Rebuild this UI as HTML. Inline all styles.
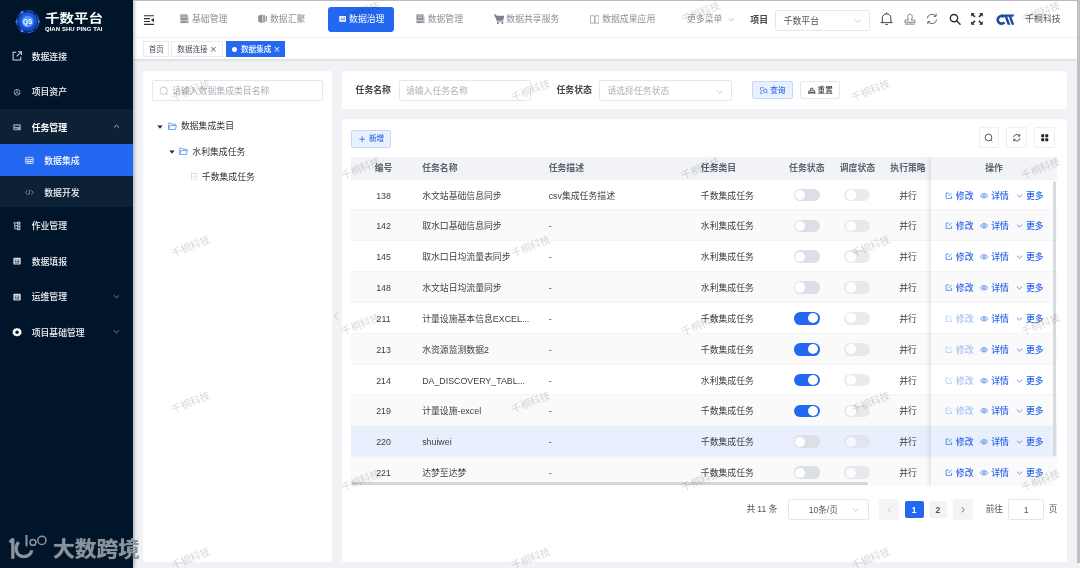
<!DOCTYPE html>
<html lang="zh-CN">
<head>
<meta charset="utf-8">
<title>千数平台 - 数据集成</title>
<style>
*{box-sizing:border-box;margin:0;padding:0}
html,body{width:1080px;height:568px;overflow:hidden;background:#f0f2f5}
body{font-family:"Liberation Sans","Noto Sans CJK SC",sans-serif;font-size:14px;color:#333;position:relative}
#app{position:absolute;left:0;top:0;width:1707px;height:898px;zoom:0.6327;overflow:hidden;background:#f0f2f5;will-change:transform}
svg{display:block}
/* ---------- sidebar ---------- */
.side{position:absolute;left:0;top:0;width:210px;height:898px;background:#001529;z-index:30;box-shadow:2px 0 6px rgba(0,21,41,.35)}
.logo{position:absolute;left:0;top:0;width:210px;height:60px}
.logo .ball{position:absolute;left:24px;top:15px;width:40px;height:40px}
.logo .t1{position:absolute;left:70.5px;top:17.5px;font-size:19px;line-height:26px;font-weight:700;color:#fff;letter-spacing:0;white-space:nowrap;transform:scaleX(1.21);transform-origin:0 0}
.logo .t2{position:absolute;left:71px;top:41.5px;font-size:9.5px;line-height:10px;font-weight:700;color:#fff;white-space:nowrap;letter-spacing:.1px}
.menu{position:absolute;left:0;top:60px;width:210px}
.mi{position:relative;height:56px;line-height:60.5px;color:#f0f2f5;font-size:14px;padding-left:50px;white-space:nowrap;font-weight:500}
.mi .ic{position:absolute;left:19px;top:21px;width:16px;height:16px}
.mi .ar{position:absolute;left:178px;top:23px;width:11px;height:11px}
.sub{background:#0c2135}
.sub .mi.top{height:56px;font-weight:700;color:#fff}
.smi{position:relative;height:50px;line-height:54.5px;color:#f0f2f5;font-size:14px;padding-left:70px;white-space:nowrap;font-weight:500}
.smi .ic{position:absolute;left:40px;top:19px;width:14px;height:14px}
.smi.on{background:#2468f2;color:#fff}
/* ---------- header ---------- */
.head{position:absolute;left:210px;top:0;width:1492px;height:60px;background:#fff;border-bottom:1px solid #f0f1f4;z-index:10}
.nav{position:absolute;top:11px;height:40px;line-height:40px;font-size:14px;color:#8b8f97;white-space:nowrap}
.nav svg{position:absolute;top:13px}
.nav.on{background:#2468f2;color:#fff;border-radius:5px}
.hic{position:absolute;top:19px;width:22px;height:22px;margin-left:-1px}
/* ---------- tabs ---------- */
.tabs{position:absolute;left:210px;top:60px;width:1492px;height:34px;background:#fff;box-shadow:0 1px 4px rgba(0,21,41,.13);z-index:9}
.tag{position:absolute;top:5px;height:25px;line-height:25.5px;border:1px solid #e8eaee;background:#fff;font-size:12px;color:#495060;padding:0 8px;white-space:nowrap}
.tag.on{background:#2468f2;border-color:#2468f2;color:#fff;font-weight:500}
.tag .x{display:inline-block;margin-left:4px;font-size:17px;font-weight:400;line-height:20px;vertical-align:top;position:relative;top:2px;opacity:.85}
.tag .dot{display:inline-block;width:8px;height:8px;border-radius:50%;background:#fff;margin-right:6px;position:relative;top:0}

/* ---------- main ---------- */
.card{position:absolute;background:#fff;border-radius:3px}
.inp{position:absolute;height:32px;line-height:32px;border:1px solid #e5e7ec;border-radius:3px;font-size:14px;color:#adb1b8;white-space:nowrap;background:#fff}
.tn{position:absolute;left:0;width:299px;height:40px}
.tn span{position:absolute;top:0;line-height:44px;font-size:14px;color:#333;white-space:nowrap}
.tn .car{position:absolute;top:16.5px;width:9.5px;height:9.5px;margin-left:-1px}
.tn .fd{position:absolute;top:14px;width:14px;height:14px;margin-left:-.5px}
.lab{position:absolute;top:15px;line-height:34px;font-size:14px;font-weight:700;color:#43464c;white-space:nowrap}
.btn{position:absolute;height:28px;line-height:27px;border:1px solid #e6e8ec;border-radius:3px;font-size:12px;white-space:nowrap;background:#fff;color:#333;font-weight:500}
.btn.pl{background:#e9f0fe;border-color:#c8d8fb;color:#2c69ea}
.tb{position:absolute;top:13.2px;width:32px;height:32px;border:1px solid #eeeff3;border-radius:2px;background:#fff}
.tb svg{position:absolute;left:7px;top:6.5px;width:15px;height:15px}
.table{position:absolute;left:15.2px;top:60.1px;width:1116.2px;height:520.5px;overflow:hidden}
.th{position:absolute;left:0;top:0;width:100%;height:35.4px;background:#f2f3f7;color:#5c6270;font-weight:700;font-size:14px;line-height:36.5px;white-space:nowrap}
.tr{position:relative;height:48.76px;line-height:51.4px;font-size:14px;color:#3b3e44;border-bottom:1px solid #f3f4f6;background:#fff;white-space:nowrap}
.th+.tr{margin-top:35.4px}
.tr.st{background:#fafafa}
.tr.hl{background:#e9effd}
.c{position:absolute;top:0;height:100%;overflow:hidden}
.c1{left:0;width:102px;text-align:center}
.c2{left:112px;width:190px}
.c3{left:312px;width:230px}
.c4{left:552.5px;width:130px}
.c5{left:680px;width:80px;text-align:center}
.c6{left:760px;width:80px;text-align:center}
.c7{left:840px;width:80px;text-align:center}
.sw{display:inline-block;position:absolute;left:19.5px;top:14.5px;width:41px;height:20px;border-radius:10px;background:#dcdfe6;vertical-align:top}
.sw i{position:absolute;left:2px;top:2px;width:16px;height:16px;border-radius:50%;background:#fff}
.sw.on{background:#2468f2}
.sw.on i{left:23px}
.sw.dis{opacity:.6}
.fix{position:absolute;left:916px;top:0;width:200.2px;height:520px;box-shadow:-3px 0 8px rgba(0,0,0,.10);background:#fff}
.fix .th{width:200.2px}
.lk{position:absolute;top:0;color:#2a66ea;font-size:14px;font-weight:500;white-space:nowrap}
.lk.dis{color:#a6c1f9}
.lk .li{display:inline-block;width:12px;height:12px;vertical-align:-1px;margin-right:5px}
.hbar{position:absolute;left:0;top:513px;width:816px;height:6px;border-radius:3px;background:#d4d6da}
.vbar{position:absolute;left:192.5px;top:37px;width:6px;height:436px;border-radius:3px;background:#d8dadf}
.pg{position:absolute;left:0;top:601px;width:1147px;height:32px}
.pg .t{position:absolute;top:0;line-height:33.5px;font-size:13.6px;color:#555;white-space:nowrap}
.pb{position:absolute;top:0;height:32px;line-height:33px;background:#f4f4f6;border-radius:3px;text-align:center;font-size:13.5px;font-weight:700;color:#555}
.pb.n{top:2.2px;height:28px;line-height:29px;background:#f3f3f4}
.pb.on,.pb.n.on{background:#2468f2;color:#fff}
.pb svg{position:absolute;left:50%;top:10px;margin-left:-6px;width:12px;height:12px}

.wm{position:absolute;left:0;top:0;width:1080px;height:568px;overflow:hidden;z-index:50;pointer-events:none}
.wm span{position:absolute;width:60px;text-align:center;font-size:10.2px;line-height:16px;color:rgba(0,0,0,.17);transform:rotate(-22deg);white-space:nowrap}
.brand{position:absolute;left:0;top:0;width:160px;height:568px;z-index:70;pointer-events:none}
.brand .bt{position:absolute;left:52.5px;top:533.5px;font-size:21px;line-height:30px;font-weight:700;transform:scaleX(1.035);transform-origin:0 0;color:#8d939c;white-space:nowrap;letter-spacing:0;text-shadow:0 0 1px rgba(255,255,255,.5)}
</style>
</head>
<body>
<div id="app">

<!-- SIDEBAR -->
<div class="side">
  <div class="logo">
    <svg class="ball" viewBox="0 0 40 40">
      <defs><radialGradient id="g1" cx="50%" cy="40%" r="60%"><stop offset="0" stop-color="#2f74f5"/><stop offset="1" stop-color="#0f3fb8"/></radialGradient></defs>
      <circle cx="20" cy="20" r="18.6" fill="#0a2f8f" opacity=".55"/>
      <circle cx="20" cy="20" r="15.2" fill="url(#g1)"/>
      <circle cx="20" cy="20" r="17.4" fill="none" stroke="#2f7dff" stroke-width="1.2" stroke-dasharray="12 4"/>
      <circle cx="11" cy="5.4" r="2.1" fill="#3d8bff"/><circle cx="2.4" cy="20" r="1.8" fill="#3d8bff"/><circle cx="37.6" cy="20" r="1.8" fill="#3d8bff"/><circle cx="11" cy="34.6" r="2.1" fill="#3d8bff"/>
      <circle cx="20" cy="20" r="9.2" fill="#4f93ff"/>
      <text x="20" y="23.6" text-anchor="middle" font-family="Liberation Sans, sans-serif" font-weight="700" font-size="10" fill="#fff">QS</text>
    </svg>
    <div class="t1">千数平台</div>
    <div class="t2">QIAN SHU PING TAI</div>
  </div>
  <div class="menu">
    <div class="mi"><svg class="ic" style="left:17.5px;top:19px;width:19px;height:19px" viewBox="0 0 16 16" fill="none" stroke="#d7dbe2" stroke-width="1.35"><path d="M7 3H2.8v10.2H13V9"/><path d="M9.5 2.2h4.3v4.3M13.6 2.4 7.6 8.4"/></svg>数据连接</div>
    <div class="mi"><svg class="ic" viewBox="0 0 16 16" fill="none" stroke="#aab1bb" stroke-width="1.3"><circle cx="8" cy="8.5" r="4.6"/><path d="M8 4v4.5l3.6 2.6M8 8.5 4.4 11"/></svg>项目资产</div>
    <div class="sub">
      <div class="mi top"><svg class="ic" viewBox="0 0 16 16"><rect x="2" y="3.4" width="12" height="9.8" rx="1.2" fill="#9aa2ad"/><path d="M4 5.600000000000001h8v2.2H4z" fill="#0c2135"/><path d="M4 10.6h4.4" stroke="#0c2135" stroke-width="1.2"/></svg>任务管理<svg class="ar" viewBox="0 0 12 12" fill="none" stroke="#d0d5dc" stroke-width="1.4"><path d="M1.5 8 6 3.6 10.5 8"/></svg></div>
      <div class="smi on"><svg class="ic" viewBox="0 0 14 14" fill="none" stroke="#fff" stroke-width="1.1"><rect x="1" y="2.2" width="12" height="9.6" rx=".8"/><path d="M1 5.4h12M1 8.6h12M5 5.4v6.4M9 5.4v6.4"/></svg>数据集成</div>
      <div class="smi"><svg class="ic" viewBox="0 0 14 14" fill="none" stroke="#aab1bb" stroke-width="1.1"><path d="M4 3.6.9 7 4 10.4M10 3.6 13.1 7 10 10.4M8 3 6 11"/></svg>数据开发</div>
    </div>
    <div class="mi"><svg class="ic" viewBox="0 0 16 16" fill="none" stroke="#d7dbe2" stroke-width="1.3"><path d="M2.4 3h6.2M4.4 3v9.4h3.800000000000001M4.400000000000001 7.6h3.8"/><rect x="8.6" y="1.8" width="4" height="2.6"/><rect x="8.6" y="6.2" width="4" height="2.8"/><rect x="8.6" y="11" width="4" height="2.8"/></svg>作业管理</div>
    <div class="mi"><svg class="ic" viewBox="0 0 16 16"><rect x="2.2" y="2.8" width="11.6" height="10.6" rx="1" fill="#d7dbe2"/><path d="M4.4 6.4h3M9 6.4h2.6M4.4 8.8h2M7.6 8.8h4M4.4 11.2h7.2" stroke="#001529" stroke-width="1.1"/></svg>数据填报</div>
    <div class="mi"><svg class="ic" viewBox="0 0 16 16"><rect x="2.2" y="2.8" width="11.6" height="10.6" rx="1" fill="#d7dbe2"/><path d="M4.4 6.4h3M9 6.4h2.6M4.4 8.8h2M7.6 8.8h4M4.4 11.2h7.2" stroke="#001529" stroke-width="1.1"/></svg>运维管理<svg class="ar" viewBox="0 0 12 12" fill="none" stroke="#a3abb6" stroke-width="1.3"><path d="M1.5 4 6 8.4 10.5 4"/></svg></div>
    <div class="mi"><svg class="ic" viewBox="0 0 16 16"><path d="M8 1.2 10 2.6l2.4-.2.9 2.2 2 1.3-.8 2.3.8 2.3-2 1.3-.9 2.2-2.4-.2L8 15.2l-2-1.4-2.4.2-.9-2.2-2-1.3.8-2.3-.8-2.3 2-1.3.9-2.2 2.4.2z" fill="#fff"/><circle cx="8" cy="8.2" r="2.7" fill="#001529"/></svg>项目基础管理<svg class="ar" viewBox="0 0 12 12" fill="none" stroke="#a3abb6" stroke-width="1.3"><path d="M1.5 4 6 8.4 10.5 4"/></svg></div>
  </div>
</div>

<!-- HEADER -->
<div class="head">
  <svg style="position:absolute;left:17px;top:24px;width:16px;height:16px" viewBox="0 0 16 16"><path d="M0 .2h16v1.9H0zM0 4.9h9.6v1.9H0zM0 9.3h9.6v1.9H0zM0 13.9h16v1.9H0zM15.8 4.6v6.8L11 8z" fill="#2b2f36"/></svg>

  <div class="nav" style="left:75px;width:90px"><svg style="left:0;top:11.5px;width:14px;height:15px" viewBox="0 0 14 15"><path d="M.6.6h11.2v9.6H.6z" fill="#8b8f97"/><path d="M2.4 3h7.4M2.4 5.6h7.4" stroke="#dfe1e4" stroke-width="1.1"/><path d="M.6 11.2h12.8v3.2H.6z" fill="#8b8f97"/><path d="M11.8 4.4h1.6v6.8h-1.6z" fill="#a4a8ae"/><circle cx="10.8" cy="12.8" r=".8" fill="#fff"/></svg><span style="position:absolute;left:18.5px">基础管理</span></div>
  <div class="nav" style="left:199px;width:90px"><svg style="left:-1px;top:11.5px;width:15px;height:15px" viewBox="0 0 15 15"><path d="M.4 2.6 7 .4v14.2L.4 12.4z" fill="#8b8f97"/><path d="M8 1.6h3.2v11.8H8zM12 3h2.4v9H12z" fill="#9ea2a9"/></svg><span style="position:absolute;left:17.8px">数据汇聚</span></div>
  <div class="nav on" style="left:308.4px;top:10.5px;width:104px;height:40px"><svg style="left:17px;width:12px;height:12px;top:14px" viewBox="0 0 12 12"><rect x=".4" y="1.4" width="11.2" height="9.2" rx="1" fill="#fff"/><path d="M2.4 4.6h2.8M6.6 4.6h3M2.4 7.4h7.2" stroke="#2468f2" stroke-width="1.2"/></svg><span style="position:absolute;left:33.4px">数据治理</span></div>
  <div class="nav" style="left:447.5px;width:90px"><svg style="left:0;top:11.5px;width:14px;height:15px" viewBox="0 0 14 15"><path d="M.6.6h11.2v9.6H.6z" fill="#8b8f97"/><path d="M2.4 3h7.4M2.4 5.6h7.4" stroke="#dfe1e4" stroke-width="1.1"/><path d="M.6 11.2h12.8v3.2H.6z" fill="#8b8f97"/><path d="M11.8 4.4h1.6v6.8h-1.6z" fill="#a4a8ae"/><circle cx="10.8" cy="12.8" r=".8" fill="#fff"/></svg><span style="position:absolute;left:18.5px">数据管理</span></div>
  <div class="nav" style="left:571.5px;width:120px"><svg style="left:-1.5px;top:11.5px;width:16.5px;height:16.5px" viewBox="0 0 14 14"><path d="M0 .8h2.6l.6 1.6h10.6l-1.6 6.2H4.2z" fill="#7b7f87"/><path d="M2.2 1.2 4.4 9.6h8.2" stroke="#7b7f87" stroke-width="1.3" fill="none"/><circle cx="5.2" cy="12.2" r="1.4" fill="#7b7f87"/><circle cx="11.2" cy="12.2" r="1.4" fill="#7b7f87"/></svg><span style="position:absolute;left:18.8px">数据共享服务</span></div>
  <div class="nav" style="left:722.5px;width:120px"><svg style="left:0;width:15px;height:14px" viewBox="0 0 15 14" fill="none" stroke="#8b8f97" stroke-width="1.1"><path d="M.8 1.2h5.4c.8 0 1.3.5 1.3 1.2v10.4H.8zM14.2 1.2H8.8c-.8 0-1.3.5-1.3 1.2v10.4h6.7z"/></svg><span style="position:absolute;left:19.3px">数据成果应用</span></div>
  <div class="nav" style="left:876px;width:90px"><span style="position:absolute;left:0">更多菜单</span><svg style="left:64px;top:15px;width:11px;height:11px" viewBox="0 0 12 12" fill="none" stroke="#a0a4ab" stroke-width="1.2"><path d="M1.5 4 6 8.4 10.5 4"/></svg></div>
  <div style="position:absolute;left:976px;top:21.5px;font-size:14px;line-height:20px;font-weight:700;color:#43464c">项目</div>
  <div style="position:absolute;left:1015px;top:16.5px;width:150px;height:32px;border:1px solid #e5e7ec;border-radius:3px;font-size:14px;line-height:32.5px;color:#555;padding-left:12px">千数平台<svg style="position:absolute;left:123px;top:9px;width:12px;height:12px" viewBox="0 0 12 12" fill="none" stroke="#b4b8bf" stroke-width="1.2"><path d="M1.5 4 6 8.4 10.5 4"/></svg></div>
  <svg class="hic" style="left:1180.5px;width:24px;height:24px;top:18px" viewBox="0 0 24 24" fill="none" stroke="#2f3339" stroke-width="1.5"><path d="M2.6 18.4h18.8M5.2 18.2v-7a6.8 6.8 0 0 1 13.6 0v7M12 2.400000000000001v2M10.2 21.4h3.6"/></svg>
  <svg class="hic" style="left:1217.5px" viewBox="0 0 20 20" fill="none" stroke="#6a6e75" stroke-width="1.25"><path d="M7.6 9.8C6 8.4 6.2 3.2 10 3.2s4 5.2 2.4 6.6v1.8h3.6c1 0 1.4.6 1.4 1.4v1.8H2.6V13c0-.8.4-1.4 1.4-1.4h3.6zM2.800000000000001 17.4h14.4"/></svg>
  <svg class="hic" style="left:1253.5px" viewBox="0 0 20 20" fill="none" stroke="#5c6066" stroke-width="1.35"><path d="M3.2 9.2A6.9 6.9 0 0 1 15.4 5.8M16.8 10.8A6.9 6.9 0 0 1 4.6 14.2"/><path d="M16 2.4v3.8h-3.8M4 17.6v-3.8h3.8"/></svg>
  <svg class="hic" style="left:1289.5px" viewBox="0 0 20 20" fill="none" stroke="#2b2f36" stroke-width="2"><circle cx="8.6" cy="8.8" r="5.3"/><path d="m12.6 12.8 4.8 4.8" stroke-linecap="round"/></svg>
  <svg class="hic" style="left:1324.5px" viewBox="0 0 20 20" fill="#2b2f36"><path d="M1.6 1.6h5.2L5 3.4l3 3L6.4 8l-3-3-1.8 1.8zM18.4 1.6v5.2L16.6 5l-3 3L12 6.4l3-3-1.8-1.8zM1.6 18.4v-5.2L3.4 15l3-3L8 13.6l-3 3 1.8 1.8zM18.4 18.4h-5.2l1.8-1.8-3-3 1.6-1.6 3 3 1.8-1.8z"/></svg>
  <svg style="position:absolute;left:1364px;top:22.5px;width:29px;height:17px" viewBox="0 0 29 17"><path d="M12.8 4.8A6 6 0 1 0 13.4 13" fill="none" stroke="#1d4a9e" stroke-width="4.2"/><path d="M8 .6H28.6l-1 3.6H9z" fill="#1d4a9e"/><path d="M13.4 3.4h4.2l5.2 13.6h-4.4zM20 3.4h4l5 13.6h-4.2z" fill="#1d4a9e"/></svg>
  <div style="position:absolute;left:1410.5px;top:20px;font-size:14px;line-height:20px;color:#50545a;white-space:nowrap">千桐科技</div>

</div>

<!-- TABS -->
<div class="tabs">
  <div class="tag" style="left:15.5px;width:41px">首页</div>
  <div class="tag" style="left:60.7px;width:81.5px">数据连接<span class="x">×</span></div>
  <div class="tag on" style="left:147.4px;width:93px"><span class="dot"></span>数据集成<span class="x">×</span></div>
</div>


<!-- LEFT TREE PANEL -->
<div class="card" style="left:226px;top:112px;width:299.5px;height:776.5px">
  <div class="inp" style="left:14.5px;top:15px;width:270px;padding-left:30px"><svg style="position:absolute;left:9px;top:7.5px;width:16px;height:16px" viewBox="0 0 16 16" fill="none" stroke="#b4b8bf" stroke-width="1.2"><circle cx="7.4" cy="7.4" r="5.8"/><path d="m11.6 11.6 2.6 2.6"/></svg>请输入数据集成类目名称</div>
  <div class="tn" style="top:67px"><svg class="car" style="left:23.5px" viewBox="0 0 8 8"><path d="M.6 2h6.8L4 6.4z" fill="#222"/></svg><svg class="fd" style="left:40px" viewBox="0 0 14 14" fill="none" stroke="#3f8cf0" stroke-width="1.2"><path d="M1 11.8V1.8h4l1.4 1.8H12v2.2M1 11.8l1.6-6h10.8l-1.6 6z"/></svg><span style="left:60px">数据集成类目</span></div>
  <div class="tn" style="top:107px"><svg class="car" style="left:41.5px" viewBox="0 0 8 8"><path d="M.6 2h6.8L4 6.4z" fill="#222"/></svg><svg class="fd" style="left:58px" viewBox="0 0 14 14" fill="none" stroke="#3f8cf0" stroke-width="1.2"><path d="M1 11.8V1.8h4l1.4 1.8H12v2.2M1 11.8l1.6-6h10.8l-1.6 6z"/></svg><span style="left:78px">水利集成任务</span></div>
  <div class="tn" style="top:147px"><svg class="fd" style="left:77px;width:10px;height:12px;top:14px" viewBox="0 0 10 12" fill="none" stroke="#bcd3f5" stroke-width="1.1"><rect x=".8" y=".8" width="8.4" height="10.4"/><path d="M3 6h4M5 4v4" stroke-width=".9"/></svg><span style="left:93px">千数集成任务</span></div>
</div>
<svg style="position:absolute;left:526.5px;top:491px;width:10px;height:16px" viewBox="0 0 10 16" fill="none" stroke="#b9bdc4" stroke-width="1.3"><path d="M8 2 2.4 8 8 14"/></svg>

<!-- SEARCH CARD -->
<div class="card" style="left:540px;top:112px;width:1147px;height:61px">
  <div class="lab" style="left:22px">任务名称</div>
  <div class="inp" style="left:90px;top:15px;width:209.5px;padding-left:10px">请输入任务名称</div>
  <div class="lab" style="left:339.5px">任务状态</div>
  <div class="inp" style="left:407.5px;top:15px;width:209.5px;padding-left:11px">请选择任务状态<svg style="position:absolute;left:183px;top:10px;width:12px;height:12px" viewBox="0 0 12 12" fill="none" stroke="#b4b8bf" stroke-width="1.2"><path d="M1.5 4 6 8.4 10.5 4"/></svg></div>
  <div class="btn pl" style="left:648.8px;top:16.2px;width:64.4px"><svg style="position:absolute;left:11px;top:7px;width:13px;height:12px" viewBox="0 0 13 12" fill="none" stroke="#2468f2" stroke-width="1.1"><path d="M5.4 1H1v3.6M1 7.4v3h3.2M1 5.9h2.6"/><circle cx="8.2" cy="6" r="2.9"/><path d="m10.3 8.2 2 2"/></svg><span style="position:absolute;left:27px">查询</span></div>
  <div class="btn df" style="left:725.2px;top:16.2px;width:62px"><svg style="position:absolute;left:10.5px;top:7px;width:12px;height:12px" viewBox="0 0 12 12" fill="none" stroke="#333" stroke-width="1.2"><path d="M1.2 11V6.2h9.6V11zM4 6V2.8h4V6M6 .6v2M1.2 8.8h9.6"/></svg><span style="position:absolute;left:25.5px">重置</span></div>
</div>

<!-- TABLE CARD -->
<div class="card" style="left:540px;top:188.3px;width:1147px;height:700.2px">
  <div class="btn pl" style="left:15.2px;top:17.6px;width:63px;height:28px;line-height:26.5px"><svg style="position:absolute;left:11px;top:8px;width:10px;height:10px" viewBox="0 0 10 10" stroke="#2468f2" stroke-width="1.3"><path d="M5 .5v9M.5 5h9"/></svg><span style="position:absolute;left:26.5px">新增</span></div>
  <div class="tb" style="left:1007.4px"><svg viewBox="0 0 14 14" fill="none" stroke="#333" stroke-width="1.2"><circle cx="6.6" cy="6.6" r="5"/><path d="m10.400000000000001 10.4 1.8 1.8"/></svg></div>
  <div class="tb" style="left:1050.8px"><svg viewBox="0 0 14 14" fill="none" stroke="#333" stroke-width="1.2"><path d="M2.2 6.4A4.9 4.9 0 0 1 11 4.2M11.8 7.6A4.9 4.9 0 0 1 3 9.8"/><path d="M11.4 1.8v2.8H8.6M2.6 12.2V9.4h2.8"/></svg></div>
  <div class="tb" style="left:1095px"><svg viewBox="0 0 14 14" fill="#222"><rect x="1.8" y="1.8" width="4.4" height="4.4" rx=".6"/><rect x="7.8" y="1.8" width="4.4" height="4.4" rx=".6"/><rect x="1.8" y="7.8" width="4.400000000000001" height="4.4" rx=".6"/><rect x="7.8" y="7.8" width="4.4" height="4.4" rx=".6"/></svg></div>

  <div class="table">
    <div class="th"><div class="c c1">编号</div><div class="c c2">任务名称</div><div class="c c3">任务描述</div><div class="c c4">任务类目</div><div class="c c5">任务状态</div><div class="c c6">调度状态</div><div class="c c7">执行策略</div></div>
    <div class="tr"><div class="c c1">138</div><div class="c c2">水文站基础信息同步</div><div class="c c3">csv集成任务描述</div><div class="c c4">千数集成任务</div><div class="c c5"><span class="sw"><i></i></span></div><div class="c c6"><span class="sw dis"><i></i></span></div><div class="c c7">并行</div></div><div class="tr st"><div class="c c1">142</div><div class="c c2">取水口基础信息同步</div><div class="c c3">-</div><div class="c c4">水利集成任务</div><div class="c c5"><span class="sw"><i></i></span></div><div class="c c6"><span class="sw dis"><i></i></span></div><div class="c c7">并行</div></div><div class="tr"><div class="c c1">145</div><div class="c c2">取水口日均流量表同步</div><div class="c c3">-</div><div class="c c4">水利集成任务</div><div class="c c5"><span class="sw"><i></i></span></div><div class="c c6"><span class="sw dis"><i></i></span></div><div class="c c7">并行</div></div><div class="tr st"><div class="c c1">148</div><div class="c c2">水文站日均流量同步</div><div class="c c3">-</div><div class="c c4">水利集成任务</div><div class="c c5"><span class="sw"><i></i></span></div><div class="c c6"><span class="sw dis"><i></i></span></div><div class="c c7">并行</div></div><div class="tr"><div class="c c1">211</div><div class="c c2">计量设施基本信息EXCEL...</div><div class="c c3">-</div><div class="c c4">千数集成任务</div><div class="c c5"><span class="sw on"><i></i></span></div><div class="c c6"><span class="sw dis"><i></i></span></div><div class="c c7">并行</div></div><div class="tr st"><div class="c c1">213</div><div class="c c2">水资源监测数据2</div><div class="c c3">-</div><div class="c c4">千数集成任务</div><div class="c c5"><span class="sw on"><i></i></span></div><div class="c c6"><span class="sw dis"><i></i></span></div><div class="c c7">并行</div></div><div class="tr"><div class="c c1">214</div><div class="c c2">DA_DISCOVERY_TABL...</div><div class="c c3">-</div><div class="c c4">水利集成任务</div><div class="c c5"><span class="sw on"><i></i></span></div><div class="c c6"><span class="sw dis"><i></i></span></div><div class="c c7">并行</div></div><div class="tr st"><div class="c c1">219</div><div class="c c2">计量设施-excel</div><div class="c c3">-</div><div class="c c4">千数集成任务</div><div class="c c5"><span class="sw on"><i></i></span></div><div class="c c6"><span class="sw dis"><i></i></span></div><div class="c c7">并行</div></div><div class="tr hl"><div class="c c1">220</div><div class="c c2">shuiwei</div><div class="c c3">-</div><div class="c c4">千数集成任务</div><div class="c c5"><span class="sw"><i></i></span></div><div class="c c6"><span class="sw dis"><i></i></span></div><div class="c c7">并行</div></div><div class="tr st"><div class="c c1">221</div><div class="c c2">达梦至达梦</div><div class="c c3">-</div><div class="c c4">千数集成任务</div><div class="c c5"><span class="sw"><i></i></span></div><div class="c c6"><span class="sw dis"><i></i></span></div><div class="c c7">并行</div></div>
    <div class="hbar"></div>
    <div class="fix">
      <div class="th"><div style="text-align:center;width:200px;padding-right:0">操作</div></div>
      <div class="tr"><span class="lk" style="left:22.6px"><svg class="li" viewBox="0 0 12 12" fill="none" stroke="currentColor" stroke-width="1.1"><path d="M6 1.6H1.8v8.6h8.6V6.2"/><path d="M10.4 1.6 5.6 6.400000000000001"/></svg>修改</span><span class="lk" style="left:77.5px"><svg class="li" style="width:13px" viewBox="0 0 13 12" fill="none" stroke="currentColor" stroke-width="1.1"><path d="M.8 6C2.2 3.6 4.2 2.6 6.5 2.6S10.8 3.6 12.2 6C10.8 8.4 8.8 9.4 6.5 9.4S2.2 8.4.8 6z"/><circle cx="6.5" cy="6" r="1.7"/></svg>详情</span><span class="lk" style="left:134.5px"><svg class="li" style="width:11px" viewBox="0 0 12 12" fill="none" stroke="currentColor" stroke-width="1.2"><path d="M1.5 4 6 8.4 10.5 4"/></svg>更多</span></div><div class="tr st"><span class="lk" style="left:22.6px"><svg class="li" viewBox="0 0 12 12" fill="none" stroke="currentColor" stroke-width="1.1"><path d="M6 1.6H1.8v8.6h8.6V6.2"/><path d="M10.4 1.6 5.6 6.400000000000001"/></svg>修改</span><span class="lk" style="left:77.5px"><svg class="li" style="width:13px" viewBox="0 0 13 12" fill="none" stroke="currentColor" stroke-width="1.1"><path d="M.8 6C2.2 3.6 4.2 2.6 6.5 2.6S10.8 3.6 12.2 6C10.8 8.4 8.8 9.4 6.5 9.4S2.2 8.4.8 6z"/><circle cx="6.5" cy="6" r="1.7"/></svg>详情</span><span class="lk" style="left:134.5px"><svg class="li" style="width:11px" viewBox="0 0 12 12" fill="none" stroke="currentColor" stroke-width="1.2"><path d="M1.5 4 6 8.4 10.5 4"/></svg>更多</span></div><div class="tr"><span class="lk" style="left:22.6px"><svg class="li" viewBox="0 0 12 12" fill="none" stroke="currentColor" stroke-width="1.1"><path d="M6 1.6H1.8v8.6h8.6V6.2"/><path d="M10.4 1.6 5.6 6.400000000000001"/></svg>修改</span><span class="lk" style="left:77.5px"><svg class="li" style="width:13px" viewBox="0 0 13 12" fill="none" stroke="currentColor" stroke-width="1.1"><path d="M.8 6C2.2 3.6 4.2 2.6 6.5 2.6S10.8 3.6 12.2 6C10.8 8.4 8.8 9.4 6.5 9.4S2.2 8.4.8 6z"/><circle cx="6.5" cy="6" r="1.7"/></svg>详情</span><span class="lk" style="left:134.5px"><svg class="li" style="width:11px" viewBox="0 0 12 12" fill="none" stroke="currentColor" stroke-width="1.2"><path d="M1.5 4 6 8.4 10.5 4"/></svg>更多</span></div><div class="tr st"><span class="lk" style="left:22.6px"><svg class="li" viewBox="0 0 12 12" fill="none" stroke="currentColor" stroke-width="1.1"><path d="M6 1.6H1.8v8.6h8.6V6.2"/><path d="M10.4 1.6 5.6 6.400000000000001"/></svg>修改</span><span class="lk" style="left:77.5px"><svg class="li" style="width:13px" viewBox="0 0 13 12" fill="none" stroke="currentColor" stroke-width="1.1"><path d="M.8 6C2.2 3.6 4.2 2.6 6.5 2.6S10.8 3.6 12.2 6C10.8 8.4 8.8 9.4 6.5 9.4S2.2 8.4.8 6z"/><circle cx="6.5" cy="6" r="1.7"/></svg>详情</span><span class="lk" style="left:134.5px"><svg class="li" style="width:11px" viewBox="0 0 12 12" fill="none" stroke="currentColor" stroke-width="1.2"><path d="M1.5 4 6 8.4 10.5 4"/></svg>更多</span></div><div class="tr"><span class="lk dis" style="left:22.6px"><svg class="li" viewBox="0 0 12 12" fill="none" stroke="currentColor" stroke-width="1.1"><path d="M6 1.6H1.8v8.6h8.6V6.2"/><path d="M10.4 1.6 5.6 6.400000000000001"/></svg>修改</span><span class="lk" style="left:77.5px"><svg class="li" style="width:13px" viewBox="0 0 13 12" fill="none" stroke="currentColor" stroke-width="1.1"><path d="M.8 6C2.2 3.6 4.2 2.6 6.5 2.6S10.8 3.6 12.2 6C10.8 8.4 8.8 9.4 6.5 9.4S2.2 8.4.8 6z"/><circle cx="6.5" cy="6" r="1.7"/></svg>详情</span><span class="lk" style="left:134.5px"><svg class="li" style="width:11px" viewBox="0 0 12 12" fill="none" stroke="currentColor" stroke-width="1.2"><path d="M1.5 4 6 8.4 10.5 4"/></svg>更多</span></div><div class="tr st"><span class="lk dis" style="left:22.6px"><svg class="li" viewBox="0 0 12 12" fill="none" stroke="currentColor" stroke-width="1.1"><path d="M6 1.6H1.8v8.6h8.6V6.2"/><path d="M10.4 1.6 5.6 6.400000000000001"/></svg>修改</span><span class="lk" style="left:77.5px"><svg class="li" style="width:13px" viewBox="0 0 13 12" fill="none" stroke="currentColor" stroke-width="1.1"><path d="M.8 6C2.2 3.6 4.2 2.6 6.5 2.6S10.8 3.6 12.2 6C10.8 8.4 8.8 9.4 6.5 9.4S2.2 8.4.8 6z"/><circle cx="6.5" cy="6" r="1.7"/></svg>详情</span><span class="lk" style="left:134.5px"><svg class="li" style="width:11px" viewBox="0 0 12 12" fill="none" stroke="currentColor" stroke-width="1.2"><path d="M1.5 4 6 8.4 10.5 4"/></svg>更多</span></div><div class="tr"><span class="lk dis" style="left:22.6px"><svg class="li" viewBox="0 0 12 12" fill="none" stroke="currentColor" stroke-width="1.1"><path d="M6 1.6H1.8v8.6h8.6V6.2"/><path d="M10.4 1.6 5.6 6.400000000000001"/></svg>修改</span><span class="lk" style="left:77.5px"><svg class="li" style="width:13px" viewBox="0 0 13 12" fill="none" stroke="currentColor" stroke-width="1.1"><path d="M.8 6C2.2 3.6 4.2 2.6 6.5 2.6S10.8 3.6 12.2 6C10.8 8.4 8.8 9.4 6.5 9.4S2.2 8.4.8 6z"/><circle cx="6.5" cy="6" r="1.7"/></svg>详情</span><span class="lk" style="left:134.5px"><svg class="li" style="width:11px" viewBox="0 0 12 12" fill="none" stroke="currentColor" stroke-width="1.2"><path d="M1.5 4 6 8.4 10.5 4"/></svg>更多</span></div><div class="tr st"><span class="lk dis" style="left:22.6px"><svg class="li" viewBox="0 0 12 12" fill="none" stroke="currentColor" stroke-width="1.1"><path d="M6 1.6H1.8v8.6h8.6V6.2"/><path d="M10.4 1.6 5.6 6.400000000000001"/></svg>修改</span><span class="lk" style="left:77.5px"><svg class="li" style="width:13px" viewBox="0 0 13 12" fill="none" stroke="currentColor" stroke-width="1.1"><path d="M.8 6C2.2 3.6 4.2 2.6 6.5 2.6S10.8 3.6 12.2 6C10.8 8.4 8.8 9.4 6.5 9.4S2.2 8.4.8 6z"/><circle cx="6.5" cy="6" r="1.7"/></svg>详情</span><span class="lk" style="left:134.5px"><svg class="li" style="width:11px" viewBox="0 0 12 12" fill="none" stroke="currentColor" stroke-width="1.2"><path d="M1.5 4 6 8.4 10.5 4"/></svg>更多</span></div><div class="tr hl"><span class="lk" style="left:22.6px"><svg class="li" viewBox="0 0 12 12" fill="none" stroke="currentColor" stroke-width="1.1"><path d="M6 1.6H1.8v8.6h8.6V6.2"/><path d="M10.4 1.6 5.6 6.400000000000001"/></svg>修改</span><span class="lk" style="left:77.5px"><svg class="li" style="width:13px" viewBox="0 0 13 12" fill="none" stroke="currentColor" stroke-width="1.1"><path d="M.8 6C2.2 3.6 4.2 2.6 6.5 2.6S10.8 3.6 12.2 6C10.8 8.4 8.8 9.4 6.5 9.4S2.2 8.4.8 6z"/><circle cx="6.5" cy="6" r="1.7"/></svg>详情</span><span class="lk" style="left:134.5px"><svg class="li" style="width:11px" viewBox="0 0 12 12" fill="none" stroke="currentColor" stroke-width="1.2"><path d="M1.5 4 6 8.4 10.5 4"/></svg>更多</span></div><div class="tr st"><span class="lk" style="left:22.6px"><svg class="li" viewBox="0 0 12 12" fill="none" stroke="currentColor" stroke-width="1.1"><path d="M6 1.6H1.8v8.6h8.6V6.2"/><path d="M10.4 1.6 5.6 6.400000000000001"/></svg>修改</span><span class="lk" style="left:77.5px"><svg class="li" style="width:13px" viewBox="0 0 13 12" fill="none" stroke="currentColor" stroke-width="1.1"><path d="M.8 6C2.2 3.6 4.2 2.6 6.5 2.6S10.8 3.6 12.2 6C10.8 8.4 8.8 9.4 6.5 9.4S2.2 8.4.8 6z"/><circle cx="6.5" cy="6" r="1.7"/></svg>详情</span><span class="lk" style="left:134.5px"><svg class="li" style="width:11px" viewBox="0 0 12 12" fill="none" stroke="currentColor" stroke-width="1.2"><path d="M1.5 4 6 8.4 10.5 4"/></svg>更多</span></div>
      <div class="vbar"></div>
    </div>
  </div>

  <div class="pg">
    <span class="t" style="left:639.7px">共 11 条</span>
    <div class="inp" style="left:705.5px;top:0;width:127.5px;height:32px;line-height:32.5px;color:#555;font-size:13.6px;padding-left:31px">10条/页<svg style="position:absolute;left:100px;top:9.5px;width:12px;height:12px" viewBox="0 0 12 12" fill="none" stroke="#b4b8bf" stroke-width="1.2"><path d="M1.5 4 6 8.4 10.5 4"/></svg></div>
    <div class="pb" style="left:849.7px;width:32px"><svg viewBox="0 0 12 12" fill="none" stroke="#c0c4cc" stroke-width="1.3"><path d="M7.6 2 3.6 6l4 4"/></svg></div>
    <div class="pb n on" style="left:889.6px;width:30.2px">1</div>
    <div class="pb n" style="left:928.2px;width:28.6px">2</div>
    <div class="pb" style="left:965.5px;width:32.5px"><svg viewBox="0 0 12 12" fill="none" stroke="#555" stroke-width="1.3"><path d="M4.4 2l4 4-4 4"/></svg></div>
    <span class="t" style="left:1018px">前往</span>
    <div class="inp" style="left:1053.8px;top:0;width:56px;height:32px;line-height:32.5px;color:#555;font-size:13.6px;text-align:center;padding:0">1</div>
    <span class="t" style="left:1117.6px">页</span>
  </div>
</div>


</div>

<!-- watermark layer -->
<div class="wm"><span style="left:161px;top:83px">千桐科技</span><span style="left:161px;top:239px">千桐科技</span><span style="left:161px;top:395px">千桐科技</span><span style="left:161px;top:551px">千桐科技</span><span style="left:331px;top:5px">千桐科技</span><span style="left:331px;top:161px">千桐科技</span><span style="left:331px;top:317px">千桐科技</span><span style="left:331px;top:473px">千桐科技</span><span style="left:331px;top:629px">千桐科技</span><span style="left:501px;top:83px">千桐科技</span><span style="left:501px;top:239px">千桐科技</span><span style="left:501px;top:395px">千桐科技</span><span style="left:501px;top:551px">千桐科技</span><span style="left:671px;top:5px">千桐科技</span><span style="left:671px;top:161px">千桐科技</span><span style="left:671px;top:317px">千桐科技</span><span style="left:671px;top:473px">千桐科技</span><span style="left:671px;top:629px">千桐科技</span><span style="left:841px;top:83px">千桐科技</span><span style="left:841px;top:239px">千桐科技</span><span style="left:841px;top:395px">千桐科技</span><span style="left:841px;top:551px">千桐科技</span><span style="left:1011px;top:5px">千桐科技</span><span style="left:1011px;top:161px">千桐科技</span><span style="left:1011px;top:317px">千桐科技</span><span style="left:1011px;top:473px">千桐科技</span><span style="left:1011px;top:629px">千桐科技</span></div>
<!-- window edges -->
<div style="position:absolute;left:133px;top:0;width:947px;height:1px;background:#b9b9bb;z-index:60"></div>
<div style="position:absolute;left:1076.5px;top:0;width:3.5px;height:568px;background:#f1f1f1;z-index:60"></div>
<div style="position:absolute;left:1076.5px;top:0;width:3.5px;height:562.5px;background:#c1c1c3;z-index:61"></div>
<!-- corner brand -->
<div class="brand">
  <svg style="position:absolute;left:9px;top:534px;width:40px;height:27px" viewBox="0 0 40 27" fill="none" stroke="#8d939c">
    <path d="M3.8 4.6v20.2" stroke-width="3.3"/><path d="M.4 8.2 4.4 4.6" stroke-width="2.6"/>
    <path d="M9.8 8.2C5.4 12.4 6.4 22.4 14.6 22.6 19.8 22.6 22.6 19.2 22.6 16.2" stroke-width="3.3"/>
    <path d="M17.5 1v11.400000000000001" stroke-width="2"/><circle cx="24" cy="8.4" r="2.9" stroke-width="1.5"/><circle cx="32.9" cy="6.4" r="4.1" stroke-width="1.5"/>
  </svg>
  <div class="bt">大数跨境</div>
</div>
</div>
</body>
</html>
